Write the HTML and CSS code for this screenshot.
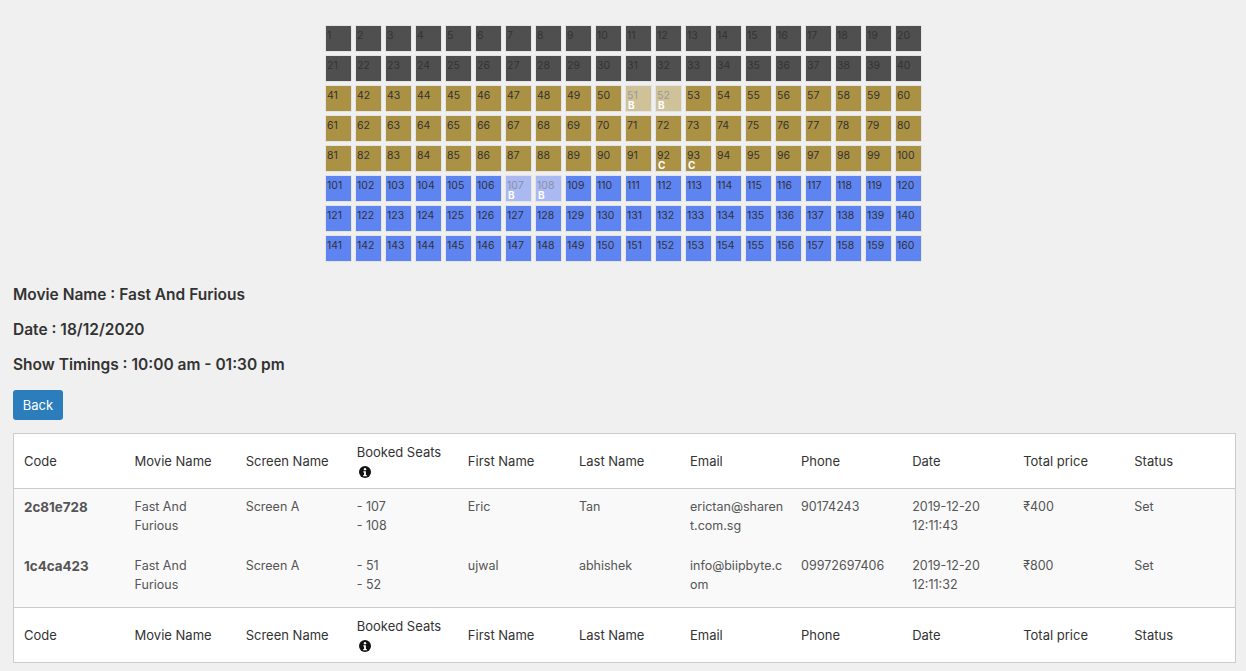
FILE: index.html
```html
<!DOCTYPE html>
<html lang="en">
<head>
  <meta charset="UTF-8" />
  <title>Booking Details</title>
  <link rel="stylesheet" href="styles.css">
</head>

<body>
  <div class="seat-map">
    <div class="seat silver">1</div><div class="seat silver">2</div><div class="seat silver">3</div><div class="seat silver">4</div><div class="seat silver">5</div><div class="seat silver">6</div><div class="seat silver">7</div><div class="seat silver">8</div><div class="seat silver">9</div><div class="seat silver">10</div>
    <div class="seat silver">11</div><div class="seat silver">12</div><div class="seat silver">13</div><div class="seat silver">14</div><div class="seat silver">15</div><div class="seat silver">16</div><div class="seat silver">17</div><div class="seat silver">18</div><div class="seat silver">19</div><div class="seat silver">20</div>
    <div class="seat silver">21</div><div class="seat silver">22</div><div class="seat silver">23</div><div class="seat silver">24</div><div class="seat silver">25</div><div class="seat silver">26</div><div class="seat silver">27</div><div class="seat silver">28</div><div class="seat silver">29</div><div class="seat silver">30</div>
    <div class="seat silver">31</div><div class="seat silver">32</div><div class="seat silver">33</div><div class="seat silver">34</div><div class="seat silver">35</div><div class="seat silver">36</div><div class="seat silver">37</div><div class="seat silver">38</div><div class="seat silver">39</div><div class="seat silver">40</div>
    <div class="seat gold">41</div><div class="seat gold">42</div><div class="seat gold">43</div><div class="seat gold">44</div><div class="seat gold">45</div><div class="seat gold">46</div><div class="seat gold">47</div><div class="seat gold">48</div><div class="seat gold">49</div><div class="seat gold">50</div>
    <div class="seat gold booked">51<b>B</b></div><div class="seat gold booked">52<b>B</b></div><div class="seat gold">53</div><div class="seat gold">54</div><div class="seat gold">55</div><div class="seat gold">56</div><div class="seat gold">57</div><div class="seat gold">58</div><div class="seat gold">59</div><div class="seat gold">60</div>
    <div class="seat gold">61</div><div class="seat gold">62</div><div class="seat gold">63</div><div class="seat gold">64</div><div class="seat gold">65</div><div class="seat gold">66</div><div class="seat gold">67</div><div class="seat gold">68</div><div class="seat gold">69</div><div class="seat gold">70</div>
    <div class="seat gold">71</div><div class="seat gold">72</div><div class="seat gold">73</div><div class="seat gold">74</div><div class="seat gold">75</div><div class="seat gold">76</div><div class="seat gold">77</div><div class="seat gold">78</div><div class="seat gold">79</div><div class="seat gold">80</div>
    <div class="seat gold">81</div><div class="seat gold">82</div><div class="seat gold">83</div><div class="seat gold">84</div><div class="seat gold">85</div><div class="seat gold">86</div><div class="seat gold">87</div><div class="seat gold">88</div><div class="seat gold">89</div><div class="seat gold">90</div>
    <div class="seat gold">91</div><div class="seat gold">92<b>C</b></div><div class="seat gold">93<b>C</b></div><div class="seat gold">94</div><div class="seat gold">95</div><div class="seat gold">96</div><div class="seat gold">97</div><div class="seat gold">98</div><div class="seat gold">99</div><div class="seat gold">100</div>
    <div class="seat blue">101</div><div class="seat blue">102</div><div class="seat blue">103</div><div class="seat blue">104</div><div class="seat blue">105</div><div class="seat blue">106</div><div class="seat blue booked">107<b>B</b></div><div class="seat blue booked">108<b>B</b></div><div class="seat blue">109</div><div class="seat blue">110</div>
    <div class="seat blue">111</div><div class="seat blue">112</div><div class="seat blue">113</div><div class="seat blue">114</div><div class="seat blue">115</div><div class="seat blue">116</div><div class="seat blue">117</div><div class="seat blue">118</div><div class="seat blue">119</div><div class="seat blue">120</div>
    <div class="seat blue">121</div><div class="seat blue">122</div><div class="seat blue">123</div><div class="seat blue">124</div><div class="seat blue">125</div><div class="seat blue">126</div><div class="seat blue">127</div><div class="seat blue">128</div><div class="seat blue">129</div><div class="seat blue">130</div>
    <div class="seat blue">131</div><div class="seat blue">132</div><div class="seat blue">133</div><div class="seat blue">134</div><div class="seat blue">135</div><div class="seat blue">136</div><div class="seat blue">137</div><div class="seat blue">138</div><div class="seat blue">139</div><div class="seat blue">140</div>
    <div class="seat blue">141</div><div class="seat blue">142</div><div class="seat blue">143</div><div class="seat blue">144</div><div class="seat blue">145</div><div class="seat blue">146</div><div class="seat blue">147</div><div class="seat blue">148</div><div class="seat blue">149</div><div class="seat blue">150</div>
    <div class="seat blue">151</div><div class="seat blue">152</div><div class="seat blue">153</div><div class="seat blue">154</div><div class="seat blue">155</div><div class="seat blue">156</div><div class="seat blue">157</div><div class="seat blue">158</div><div class="seat blue">159</div><div class="seat blue">160</div>
  </div>

  <div class="show-info">
    <h5>Movie Name : Fast And Furious</h5>
    <h5>Date : 18/12/2020</h5>
    <h5>Show Timings : 10:00 am - 01:30 pm</h5>
  </div>

  <a class="btn" href="#">Back</a>

  <table class="bookings">
    <thead>
      <tr>
        <th>Code</th>
        <th>Movie Name</th>
        <th>Screen Name</th>
        <th>Booked Seats <svg class="info" viewBox="0 0 16 16"><circle cx="8" cy="8" r="8" fill="#111"/><circle cx="8" cy="4.2" r="1.6" fill="#fff"/><path d="M5.8 6.9h3.4v5h1.2v1.6H5.6v-1.6h1.2V8.5h-1z" fill="#fff"/></svg></th>
        <th>First Name</th>
        <th>Last Name</th>
        <th>Email</th>
        <th>Phone</th>
        <th>Date</th>
        <th>Total price</th>
        <th>Status</th>
      </tr>
    </thead>
    <tbody>
      <tr>
        <td class="code">2c81e728</td>
        <td>Fast And Furious</td>
        <td>Screen A</td>
        <td>- 107<br>- 108</td>
        <td>Eric</td>
        <td>Tan</td>
        <td>erictan@sharent.com.sg</td>
        <td>90174243</td>
        <td>2019-12-20 12:11:43</td>
        <td>₹400</td>
        <td>Set</td>
      </tr>
      <tr>
        <td class="code">1c4ca423</td>
        <td>Fast And Furious</td>
        <td>Screen A</td>
        <td>- 51<br>- 52</td>
        <td>ujwal</td>
        <td>abhishek</td>
        <td>info@biipbyte.com</td>
        <td>09972697406</td>
        <td>2019-12-20 12:11:32</td>
        <td>₹800</td>
        <td>Set</td>
      </tr>
    </tbody>
    <tfoot>
      <tr>
        <th>Code</th>
        <th>Movie Name</th>
        <th>Screen Name</th>
        <th>Booked Seats <svg class="info" viewBox="0 0 16 16"><circle cx="8" cy="8" r="8" fill="#111"/><circle cx="8" cy="4.2" r="1.6" fill="#fff"/><path d="M5.8 6.9h3.4v5h1.2v1.6H5.6v-1.6h1.2V8.5h-1z" fill="#fff"/></svg></th>
        <th>First Name</th>
        <th>Last Name</th>
        <th>Email</th>
        <th>Phone</th>
        <th>Date</th>
        <th>Total price</th>
        <th>Status</th>
      </tr>
    </tfoot>
  </table>
</body>
</html>
```

FILE: styles.css
```css
/* --- Global --- */
* { box-sizing: border-box; }
body {
  margin: 0;
  padding: 25px 10px 0 13px;
  background: #f0f0f0;
  color: #333;
  font-family: 'Inter', sans-serif;
  font-size: 12.5px;
  line-height: 19px;
}

/* --- Seat map --- */
.seat-map {
  display: grid;
  grid-template-columns: repeat(20, 27px);
  gap: 3px;
  justify-content: center;
  margin-right: 2px;
}
.seat {
  height: 27px;
  padding: 4px 1px 0;
  border: 1px solid #e4e4e4;
  color: #333;
  font-size: 10.5px;
  line-height: 11px;
}
.seat b {
  display: block;
  padding-left: 1px;
  color: #fff;
  font-size: 10px;
  line-height: 8px;
}
.silver { background: #4f4f4f; }
.gold { background: #ab9144; }
.blue { background: #5e84f2; }
.gold.booked { background: #cfc299; color: #999; }
.blue.booked { background: #aab9f1; color: #8b90a8; }

/* --- Show info --- */
.show-info { margin-top: 22px; }
h5 {
  margin: 0 0 14px;
  color: #333;
  font-size: 15.5px;
  font-weight: 600;
  line-height: 21px;
}

.btn {
  display: block;
  width: 50px;
  height: 30px;
  margin-top: 15px;
  background: #2b7dbc;
  border-radius: 3px;
  color: #fff;
  font-size: 13px;
  line-height: 30px;
  text-align: center;
  text-decoration: none;
}

/* --- Table --- */
.bookings {
  width: 1223px;
  margin-top: 13px;
  border-collapse: collapse;
  table-layout: fixed;
  border: 1px solid #ccc;
  background: #fff;
}
.bookings th {
  height: 55px;
  padding: 0 11px 0 10px;
  font-size: 13px;
  font-weight: 400;
  line-height: 19px;
  text-align: left;
  vertical-align: middle;
}
.bookings thead th { border-bottom: 1px solid #ccc; }
.bookings tfoot th { border-top: 1px solid #ccc; }
.bookings td {
  height: 59px;
  padding: 8px 4px 12px 10px;
  background: #f9f9f9;
  color: #555;
  vertical-align: top;
  word-break: break-all;
}
.bookings tbody tr:last-child td { height: 60px; }
.bookings td:nth-child(2),
.bookings td:nth-child(9) { padding-right: 10px; word-break: normal; }
.bookings .code {
  padding-top: 9px;
  font-size: 13.4px;
  font-weight: 700;
}
.info {
  display: block;
  width: 12px;
  height: 12px;
  margin: 4px 0 2px 2px;
}
```
